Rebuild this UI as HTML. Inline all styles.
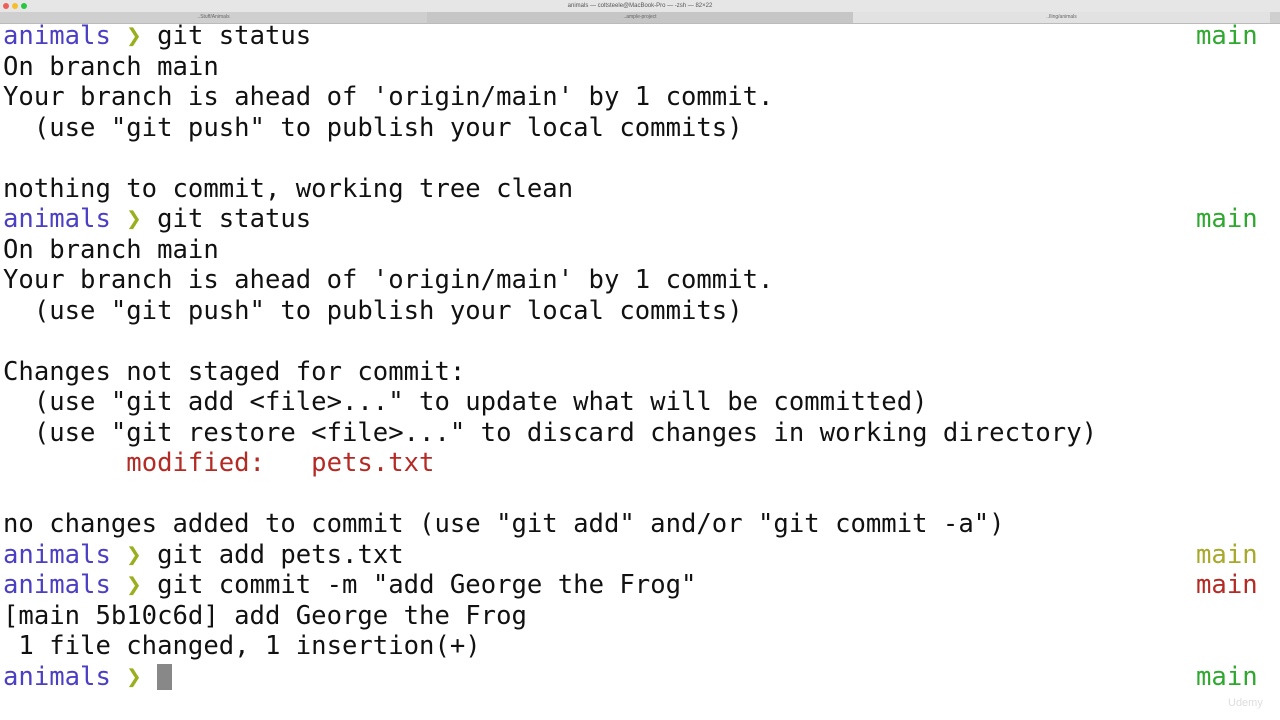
<!DOCTYPE html>
<html><head><meta charset="utf-8"><style>
html,body{margin:0;padding:0;width:1280px;height:720px;overflow:hidden;background:#fff}
.title{position:absolute;left:0;top:0;width:1280px;height:12px;background:#e6e6e6;font:6px "Liberation Sans",sans-serif;color:#555;text-align:center;line-height:12px}
.tabs{position:absolute;left:0;top:12px;width:1280px;height:11px;background:#cfcfcf;border-bottom:1px solid #bbb;font:5px "Liberation Sans",sans-serif;color:#666}
.tabs div{position:absolute;top:0;height:11px;line-height:11px;text-align:center}
.dot{position:absolute;top:3px;width:6px;height:6px;border-radius:50%}
.l{position:absolute;left:3px;font:25.6px "DejaVu Sans Mono","Liberation Mono",monospace;color:#111;white-space:pre;line-height:30px;height:30px}
.p{color:#4b3fc4}.a{color:#9aae1e}.g{color:#2fa82f}.y{color:#a8a82a}.r{color:#b42a24}
.m{position:absolute;left:1196px;font:25.6px "DejaVu Sans Mono","Liberation Mono",monospace;line-height:30px}
.cur{display:inline-block;width:15px;height:26px;background:#888;vertical-align:-5px}
</style></head><body>
<div class="title">animals — coltsteele@MacBook-Pro — -zsh — 82×22</div>
<div class="dot" style="left:3px;background:#ee5f57"></div>
<div class="dot" style="left:12px;background:#f6bd2f"></div>
<div class="dot" style="left:21px;background:#29c740"></div>
<div class="tabs"><div style="left:0;width:427px">..Stuff/Animals</div><div style="left:427px;width:426px;background:#c6c6c6">..ample-project</div><div style="left:853px;width:417px;background:#e2e2e2">..Iling/animals</div></div>
<div class="l" style="top:21px"><span class="p">animals</span> <span class="a">❯</span> git status</div><div class="m g" style="top:21px">main</div>
<div class="l" style="top:51.5px">On branch main</div>
<div class="l" style="top:82px">Your branch is ahead of 'origin/main' by 1 commit.</div>
<div class="l" style="top:112.5px">  (use "git push" to publish your local commits)</div>
<div class="l" style="top:173.5px">nothing to commit, working tree clean</div>
<div class="l" style="top:204px"><span class="p">animals</span> <span class="a">❯</span> git status</div><div class="m g" style="top:204px">main</div>
<div class="l" style="top:234.5px">On branch main</div>
<div class="l" style="top:265px">Your branch is ahead of 'origin/main' by 1 commit.</div>
<div class="l" style="top:295.5px">  (use "git push" to publish your local commits)</div>
<div class="l" style="top:356.5px">Changes not staged for commit:</div>
<div class="l" style="top:387px">  (use "git add &lt;file&gt;..." to update what will be committed)</div>
<div class="l" style="top:417.5px">  (use "git restore &lt;file&gt;..." to discard changes in working directory)</div>
<div class="l" style="top:448px">        <span class="r">modified:   pets.txt</span></div>
<div class="l" style="top:509px">no changes added to commit (use "git add" and/or "git commit -a")</div>
<div class="l" style="top:539.5px"><span class="p">animals</span> <span class="a">❯</span> git add pets.txt</div><div class="m y" style="top:539.5px">main</div>
<div class="l" style="top:570px"><span class="p">animals</span> <span class="a">❯</span> git commit -m "add George the Frog"</div><div class="m r" style="top:570px">main</div>
<div class="l" style="top:600.5px">[main 5b10c6d] add George the Frog</div>
<div class="l" style="top:631px"> 1 file changed, 1 insertion(+)</div>
<div class="l" style="top:661.5px"><span class="p">animals</span> <span class="a">❯</span> <span class="cur"></span></div><div class="m g" style="top:661.5px">main</div>
<div style="position:absolute;left:1228px;top:697px;font:11px 'Liberation Sans',sans-serif;color:#ddd">Udemy</div>
</body></html>
